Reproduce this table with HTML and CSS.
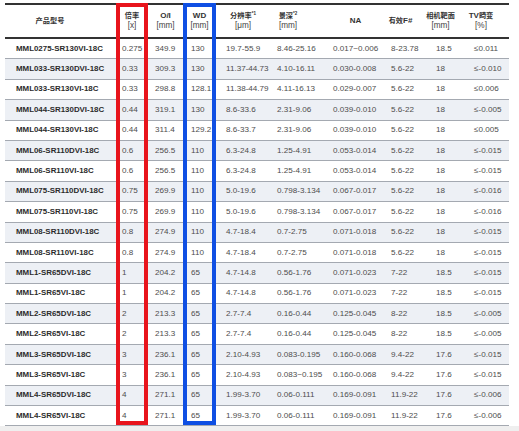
FILE: index.html
```html
<!DOCTYPE html>
<html lang="zh">
<head>
<meta charset="utf-8">
<title>MML Lens Table</title>
<link rel="stylesheet" href="styles.css">
</head>
<body>
<div class="sheet">
  <div class="spec">
    <div class="row head">
      <div class="hc c1"><span class="cjk">产品型号</span></div>
      <div class="hc c2"><span class="cjk">倍率</span><span class="unit">[x]</span></div>
      <div class="hc c3"><span>O/I</span><span class="unit">[mm]</span></div>
      <div class="hc c4"><span>WD</span><span class="unit">[mm]</span></div>
      <div class="hc c5"><span class="cjk">分辨率<sup class="note">*1</sup></span><span class="unit">[μm]</span></div>
      <div class="hc c6"><span class="cjk">景深<sup class="note">*2</sup></span><span class="unit">[mm]</span></div>
      <div class="hc c7"><span>NA</span></div>
      <div class="hc c8"><span><span class="cjk">有效</span>F#</span></div>
      <div class="hc c9"><span class="cjk">相机靶面</span><span class="unit">[mm]</span></div>
      <div class="hc c10"><span>TV<span class="cjk">畸变</span></span><span class="unit">[%]</span></div>
    </div>
    <div class="row"><div class="dc c1">MML0275-SR130VI-18C</div><div class="dc c2">0.275</div><div class="dc c3">349.9</div><div class="dc c4">130</div><div class="dc c5">19.7-55.9</div><div class="dc c6">8.46-25.16</div><div class="dc c7">0.017~0.006</div><div class="dc c8">8-23.78</div><div class="dc c9">18.5</div><div class="dc c10">≤0.011</div></div>
    <div class="row alt"><div class="dc c1">MML033-SR130DVI-18C</div><div class="dc c2">0.33</div><div class="dc c3">309.3</div><div class="dc c4">130</div><div class="dc c5">11.37-44.73</div><div class="dc c6">4.10-16.11</div><div class="dc c7">0.030-0.008</div><div class="dc c8">5.6-22</div><div class="dc c9">18</div><div class="dc c10">≤-0.010</div></div>
    <div class="row"><div class="dc c1">MML033-SR130VI-18C</div><div class="dc c2">0.33</div><div class="dc c3">298.8</div><div class="dc c4">128.1</div><div class="dc c5">11.38-44.79</div><div class="dc c6">4.11-16.13</div><div class="dc c7">0.029-0.007</div><div class="dc c8">5.6-22</div><div class="dc c9">18</div><div class="dc c10">≤0.006</div></div>
    <div class="row alt"><div class="dc c1">MML044-SR130DVI-18C</div><div class="dc c2">0.44</div><div class="dc c3">319.1</div><div class="dc c4">130</div><div class="dc c5">8.6-33.6</div><div class="dc c6">2.31-9.06</div><div class="dc c7">0.039-0.010</div><div class="dc c8">5.6-22</div><div class="dc c9">18</div><div class="dc c10">≤-0.005</div></div>
    <div class="row"><div class="dc c1">MML044-SR130VI-18C</div><div class="dc c2">0.44</div><div class="dc c3">311.4</div><div class="dc c4">129.2</div><div class="dc c5">8.6-33.7</div><div class="dc c6">2.31-9.06</div><div class="dc c7">0.039-0.010</div><div class="dc c8">5.6-22</div><div class="dc c9">18</div><div class="dc c10">≤0.005</div></div>
    <div class="row alt"><div class="dc c1">MML06-SR110DVI-18C</div><div class="dc c2">0.6</div><div class="dc c3">256.5</div><div class="dc c4">110</div><div class="dc c5">6.3-24.8</div><div class="dc c6">1.25-4.91</div><div class="dc c7">0.053-0.014</div><div class="dc c8">5.6-22</div><div class="dc c9">18</div><div class="dc c10">≤-0.015</div></div>
    <div class="row"><div class="dc c1">MML06-SR110VI-18C</div><div class="dc c2">0.6</div><div class="dc c3">256.5</div><div class="dc c4">110</div><div class="dc c5">6.3-24.8</div><div class="dc c6">1.25-4.91</div><div class="dc c7">0.053-0.014</div><div class="dc c8">5.6-22</div><div class="dc c9">18</div><div class="dc c10">≤-0.015</div></div>
    <div class="row alt"><div class="dc c1">MML075-SR110DVI-18C</div><div class="dc c2">0.75</div><div class="dc c3">269.9</div><div class="dc c4">110</div><div class="dc c5">5.0-19.6</div><div class="dc c6">0.798-3.134</div><div class="dc c7">0.067-0.017</div><div class="dc c8">5.6-22</div><div class="dc c9">18</div><div class="dc c10">≤-0.016</div></div>
    <div class="row"><div class="dc c1">MML075-SR110VI-18C</div><div class="dc c2">0.75</div><div class="dc c3">269.9</div><div class="dc c4">110</div><div class="dc c5">5.0-19.6</div><div class="dc c6">0.798-3.134</div><div class="dc c7">0.067-0.017</div><div class="dc c8">5.6-22</div><div class="dc c9">18</div><div class="dc c10">≤-0.016</div></div>
    <div class="row alt"><div class="dc c1">MML08-SR110DVI-18C</div><div class="dc c2">0.8</div><div class="dc c3">274.9</div><div class="dc c4">110</div><div class="dc c5">4.7-18.4</div><div class="dc c6">0.7-2.75</div><div class="dc c7">0.071-0.018</div><div class="dc c8">5.6-22</div><div class="dc c9">18</div><div class="dc c10">≤-0.015</div></div>
    <div class="row"><div class="dc c1">MML08-SR110VI-18C</div><div class="dc c2">0.8</div><div class="dc c3">274.9</div><div class="dc c4">110</div><div class="dc c5">4.7-18.4</div><div class="dc c6">0.7-2.75</div><div class="dc c7">0.071-0.018</div><div class="dc c8">5.6-22</div><div class="dc c9">18</div><div class="dc c10">≤-0.015</div></div>
    <div class="row alt"><div class="dc c1">MML1-SR65DVI-18C</div><div class="dc c2">1</div><div class="dc c3">204.2</div><div class="dc c4">65</div><div class="dc c5">4.7-14.8</div><div class="dc c6">0.56-1.76</div><div class="dc c7">0.071-0.023</div><div class="dc c8">7-22</div><div class="dc c9">18.5</div><div class="dc c10">≤-0.015</div></div>
    <div class="row"><div class="dc c1">MML1-SR65VI-18C</div><div class="dc c2">1</div><div class="dc c3">204.2</div><div class="dc c4">65</div><div class="dc c5">4.7-14.8</div><div class="dc c6">0.56-1.76</div><div class="dc c7">0.071-0.023</div><div class="dc c8">7-22</div><div class="dc c9">18.5</div><div class="dc c10">≤-0.015</div></div>
    <div class="row alt"><div class="dc c1">MML2-SR65DVI-18C</div><div class="dc c2">2</div><div class="dc c3">213.3</div><div class="dc c4">65</div><div class="dc c5">2.7-7.4</div><div class="dc c6">0.16-0.44</div><div class="dc c7">0.125-0.045</div><div class="dc c8">8-22</div><div class="dc c9">18.5</div><div class="dc c10">≤-0.005</div></div>
    <div class="row"><div class="dc c1">MML2-SR65VI-18C</div><div class="dc c2">2</div><div class="dc c3">213.3</div><div class="dc c4">65</div><div class="dc c5">2.7-7.4</div><div class="dc c6">0.16-0.44</div><div class="dc c7">0.125-0.045</div><div class="dc c8">8-22</div><div class="dc c9">18.5</div><div class="dc c10">≤-0.005</div></div>
    <div class="row alt"><div class="dc c1">MML3-SR65DVI-18C</div><div class="dc c2">3</div><div class="dc c3">236.1</div><div class="dc c4">65</div><div class="dc c5">2.10-4.93</div><div class="dc c6">0.083-0.195</div><div class="dc c7">0.160-0.068</div><div class="dc c8">9.4-22</div><div class="dc c9">17.6</div><div class="dc c10">≤-0.015</div></div>
    <div class="row"><div class="dc c1">MML3-SR65VI-18C</div><div class="dc c2">3</div><div class="dc c3">236.1</div><div class="dc c4">65</div><div class="dc c5">2.10-4.93</div><div class="dc c6">0.083~0.195</div><div class="dc c7">0.160-0.068</div><div class="dc c8">9.4-22</div><div class="dc c9">17.6</div><div class="dc c10">≤-0.015</div></div>
    <div class="row alt"><div class="dc c1">MML4-SR65DVI-18C</div><div class="dc c2">4</div><div class="dc c3">271.1</div><div class="dc c4">65</div><div class="dc c5">1.99-3.70</div><div class="dc c6">0.06-0.111</div><div class="dc c7">0.169-0.091</div><div class="dc c8">11.9-22</div><div class="dc c9">17.6</div><div class="dc c10">≤-0.006</div></div>
    <div class="row"><div class="dc c1">MML4-SR65VI-18C</div><div class="dc c2">4</div><div class="dc c3">271.1</div><div class="dc c4">65</div><div class="dc c5">1.99-3.70</div><div class="dc c6">0.06-0.111</div><div class="dc c7">0.169-0.091</div><div class="dc c8">11.9-22</div><div class="dc c9">17.6</div><div class="dc c10">≤-0.006</div></div>
    <div class="mark mark-red"></div>
    <div class="mark mark-blue"></div>
  </div>
  <div class="footer-strip"></div>
</div>
</body>
</html>
```

FILE: styles.css
```css
html, body {
  margin: 0;
  padding: 0;
  height: 431px;
  overflow: hidden;
  background: #ffffff;
}

body {
  font-family: "Liberation Sans", "Noto Sans CJK SC", sans-serif;
  color: #4a4a4a;
}

.sheet {
  padding-top: 3px;
}

.spec {
  position: relative;
  margin-left: 5px;
  width: 504px;
  border-top: 2px solid #333333;
}

.row {
  display: grid;
  grid-template-columns: 111px 32px 35px 33px 54px 56px 59px 43px 38px 43px;
  height: 20.4px;
  box-sizing: border-box;
  border-bottom: 1px solid #a4a9b1;
  align-items: center;
}

.row.alt {
  background: #edf0f5;
}

.row.head {
  height: 34px;
  border-bottom: 2px solid #333333;
  background: #ffffff;
}

.hc {
  display: flex;
  flex-direction: column;
  align-items: center;
  justify-content: center;
  font-size: 8px;
  font-weight: bold;
  color: #333333;
  line-height: 10px;
  white-space: nowrap;
}

.hc .cjk {
  font-size: 7.2px;
}

.hc .unit {
  font-weight: normal;
  font-size: 8.2px;
  color: #444444;
}

.note {
  font-size: 4.5px;
  vertical-align: 3px;
  line-height: 0;
}

.hc.c1 { padding-right: 21px; }
.hc.c6 { padding-right: 20px; }
.hc.c8 { padding-right: 12px; }
.hc.c9 { padding-right: 13px; }
.hc.c10 { padding-right: 13px; }

.dc {
  font-size: 8.1px;
  white-space: nowrap;
  line-height: 10px;
  color: #4d4d4d;
}

.dc.c1 {
  padding-left: 11px;
  font-weight: bold;
  font-size: 7.9px;
  color: #2b2b2b;
}
.dc.c2 { padding-left: 6px; }
.dc.c3 { padding-left: 7px; }
.dc.c4 { padding-left: 8px; }
.dc.c5 { padding-left: 10px; }
.dc.c6 { padding-left: 7px; }
.dc.c7 { padding-left: 7px; }
.dc.c8 { padding-left: 6px; }
.dc.c9 { padding-left: 8px; }
.dc.c10 { padding-left: 8px; }

.mark {
  position: absolute;
  top: -2px;
  height: 422px;
  box-sizing: border-box;
  border: 4px solid;
  pointer-events: none;
}

.mark-red {
  left: 111px;
  width: 32px;
  border-color: #e8141c;
}

.mark-blue {
  left: 178px;
  width: 33px;
  border-color: #0f4fe3;
}

.footer-strip {
  height: 10px;
  background: #efefef;
}
```
